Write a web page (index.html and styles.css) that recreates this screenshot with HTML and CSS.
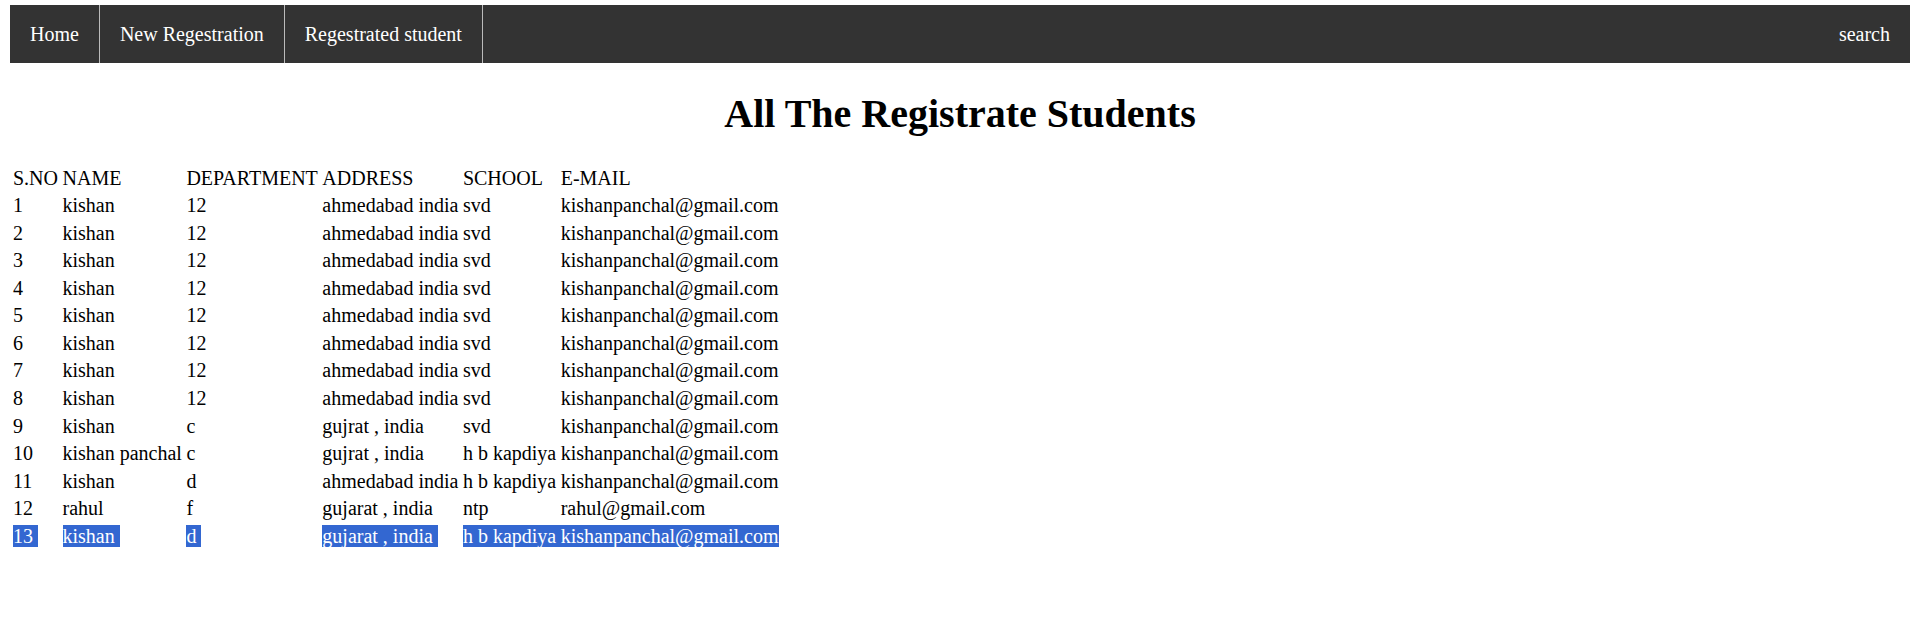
FILE: index.html
```html
<!DOCTYPE html>
<html>
<head>
<meta charset="utf-8">
<title>All The Registrate Students</title>
<link rel="stylesheet" href="styles.css">
</head>
<body>
<ul class="nav">
  <li class="nav-item"><a href="#">Home</a></li>
  <li class="nav-item"><a href="#">New Regestration</a></li>
  <li class="nav-item"><a href="#">Regestrated student</a></li>
  <li class="nav-item nav-right"><a href="#">search</a></li>
</ul>
<h1 class="title">All The Registrate Students</h1>
<table class="students">
  <tr><td>S.NO</td><td>NAME</td><td>DEPARTMENT</td><td>ADDRESS</td><td>SCHOOL</td><td>E-MAIL</td></tr>
  <tr><td>1</td><td>kishan</td><td>12</td><td>ahmedabad india</td><td>svd</td><td>kishanpanchal@gmail.com</td></tr>
  <tr><td>2</td><td>kishan</td><td>12</td><td>ahmedabad india</td><td>svd</td><td>kishanpanchal@gmail.com</td></tr>
  <tr><td>3</td><td>kishan</td><td>12</td><td>ahmedabad india</td><td>svd</td><td>kishanpanchal@gmail.com</td></tr>
  <tr><td>4</td><td>kishan</td><td>12</td><td>ahmedabad india</td><td>svd</td><td>kishanpanchal@gmail.com</td></tr>
  <tr><td>5</td><td>kishan</td><td>12</td><td>ahmedabad india</td><td>svd</td><td>kishanpanchal@gmail.com</td></tr>
  <tr><td>6</td><td>kishan</td><td>12</td><td>ahmedabad india</td><td>svd</td><td>kishanpanchal@gmail.com</td></tr>
  <tr><td>7</td><td>kishan</td><td>12</td><td>ahmedabad india</td><td>svd</td><td>kishanpanchal@gmail.com</td></tr>
  <tr><td>8</td><td>kishan</td><td>12</td><td>ahmedabad india</td><td>svd</td><td>kishanpanchal@gmail.com</td></tr>
  <tr><td>9</td><td>kishan</td><td>c</td><td>gujrat , india</td><td>svd</td><td>kishanpanchal@gmail.com</td></tr>
  <tr><td>10</td><td>kishan panchal</td><td>c</td><td>gujrat , india</td><td>h b kapdiya</td><td>kishanpanchal@gmail.com</td></tr>
  <tr><td>11</td><td>kishan</td><td>d</td><td>ahmedabad india</td><td>h b kapdiya</td><td>kishanpanchal@gmail.com</td></tr>
  <tr><td>12</td><td>rahul</td><td>f</td><td>gujarat , india</td><td>ntp</td><td>rahul@gmail.com</td></tr>
  <tr class="selected"><td><span class="sel">13</span></td><td><span class="sel">kishan</span></td><td><span class="sel">d</span></td><td><span class="sel">gujarat , india</span></td><td><span class="sel">h b kapdiya</span></td><td><span class="sel sel-last">kishanpanchal@gmail.com</span></td></tr>
</table>
</body>
</html>
```

FILE: styles.css
```css
html {
  background: #ffffff;
}

body {
  margin: 5px 8px 8px 10px;
  font-family: "Liberation Serif", "Times New Roman", serif;
  font-size: 20px;
  color: #000000;
}

.nav {
  list-style: none;
  margin: 0;
  padding: 0;
  display: flex;
  background-color: #333333;
}

.nav-item a {
  display: block;
  color: #ffffff;
  text-decoration: none;
  padding: 17.5px 20px;
  line-height: 23px;
  border-right: 1px solid #bbbbbb;
}

.nav-right {
  margin-left: auto;
}

.nav-right a {
  border-right: none;
}

.title {
  font-size: 40px;
  font-weight: bold;
  text-align: center;
  margin: 26.8px 0;
}

.students {
  border-collapse: separate;
  border-spacing: 2px;
}

.students td {
  padding: 1px 1.5px 1px 1px;
  line-height: 23.55px;
  text-align: left;
  vertical-align: middle;
  white-space: nowrap;
}

.sel {
  background-color: #3367d1;
  color: #ffffff;
  padding-right: 5px;
  margin-right: -5px;
}

.sel-last {
  padding-right: 0;
  margin-right: 0;
}
```
